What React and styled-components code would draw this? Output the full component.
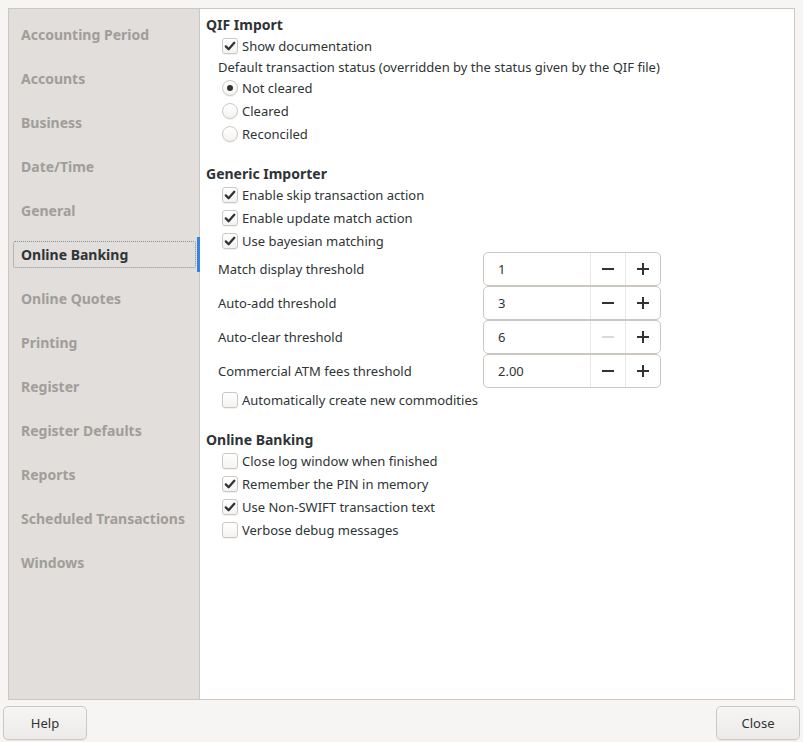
import styled, { createGlobalStyle } from 'styled-components';


const GlobalStyle = createGlobalStyle`
  html, body {
    margin: 0;
    padding: 0;
    background: #f6f5f4;
    font-family: "Noto Sans", "DejaVu Sans", sans-serif;
    color: #2e3436;
  }
`;


const pages = [
  'Accounting Period',
  'Accounts',
  'Business',
  'Date/Time',
  'General',
  'Online Banking',
  'Online Quotes',
  'Printing',
  'Register',
  'Register Defaults',
  'Reports',
  'Scheduled Transactions',
  'Windows',
];

const spins = [
  { label: 'Match display threshold', value: '1' },
  { label: 'Auto-add threshold', value: '3' },
  { label: 'Auto-clear threshold', value: '6', minDisabled: true },
  { label: 'Commercial ATM fees threshold', value: '2.00' },
];


function CheckMark() {
  return (
    <svg width="12" height="12" viewBox="0 0 12 12">
      <path d="M1.8 6.4 L4.6 9.2 L10.3 2.8" fill="none" stroke="#2e3436" strokeWidth="2.3" strokeLinecap="round" strokeLinejoin="round" />
    </svg>
  );
}


function Check({ checked, children }) {
  return (
    <OptionRow>
      <CheckBox>{checked && <CheckMark />}</CheckBox>
      <span>{children}</span>
    </OptionRow>
  );
}


function Radio({ checked, children }) {
  return (
    <OptionRow>
      <RadioCircle $checked={checked} />
      <span>{children}</span>
    </OptionRow>
  );
}


function SpinRow({ label, value, minDisabled }) {
  return (
    <SpinLine>
      <SpinLabel>{label}</SpinLabel>
      <SpinBox>
        <SpinEntry>{value}</SpinEntry>
        <SpinButton $disabled={minDisabled}>
          <svg width="12" height="12" viewBox="0 0 12 12">
            <rect x="0" y="5" width="12" height="2" fill="currentColor" />
          </svg>
        </SpinButton>
        <SpinButton>
          <svg width="12" height="12" viewBox="0 0 12 12">
            <rect x="0" y="5" width="12" height="2" fill="currentColor" />
            <rect x="5" y="0" width="2" height="12" fill="currentColor" />
          </svg>
        </SpinButton>
      </SpinBox>
    </SpinLine>
  );
}


function App() {

  return (
    <Window>
      <GlobalStyle />

      <Frame>

        <Sidebar>
          {
            pages.map(name => (
              <SideItem key={name} $active={name === 'Online Banking'}>
                <SideLabel $active={name === 'Online Banking'}>{name}</SideLabel>
              </SideItem>
            ))
          }
        </Sidebar>

        <Content>

          <SectionTitle>QIF Import</SectionTitle>
          <Check checked>Show documentation</Check>
          <NoteLabel>Default transaction status (overridden by the status given by the QIF file)</NoteLabel>
          <Radio checked>Not cleared</Radio>
          <Radio>Cleared</Radio>
          <Radio>Reconciled</Radio>

          <SectionTitle $gap>Generic Importer</SectionTitle>
          <Check checked>Enable skip transaction action</Check>
          <Check checked>Enable update match action</Check>
          <Check checked>Use bayesian matching</Check>
          {
            spins.map(s => <SpinRow key={s.label} {...s} />)
          }
          <Check>Automatically create new commodities</Check>

          <SectionTitle $gap>Online Banking</SectionTitle>
          <Check>Close log window when finished</Check>
          <Check checked>Remember the PIN in memory</Check>
          <Check checked>Use Non-SWIFT transaction text</Check>
          <Check>Verbose debug messages</Check>

        </Content>

      </Frame>

      <Footer>
        <Button>Help</Button>
        <Button>Close</Button>
      </Footer>

    </Window>
  );
}


const Window = styled.div`
  width: 803px;
  height: 742px;
  display: flex;
  flex-direction: column;
  box-sizing: border-box;
  overflow: hidden;
`;

const Frame = styled.div`
  margin: 8px 8px 0 8px;
  height: 692px;
  box-sizing: border-box;
  border: 1px solid #cdc7c2;
  display: flex;
  background: #ffffff;
`;

const Sidebar = styled.div`
  width: 191px;
  flex: none;
  background: #e1dedb;
  border-right: 1px solid #cdc7c2;
  box-sizing: border-box;
  padding-top: 4px;
`;

const SideItem = styled.div`
  position: relative;
  height: 44px;
  box-sizing: border-box;
  padding: 8px 3px 9px 4px;

  &::after{
    content: '';
    display: ${p => p.$active ? 'block' : 'none'};
    position: absolute;
    right: -1px;
    top: 4px;
    width: 3px;
    height: 35px;
    background: #3584e4;
  }
`;

const SideLabel = styled.div`
  height: 27px;
  box-sizing: border-box;
  padding-left: 7px;
  display: flex;
  align-items: center;
  font-size: 14px;
  font-weight: 700;
  color: ${p => p.$active ? '#2e3436' : '#a09d9a'};
  border: 1px dotted ${p => p.$active ? '#8b8e8f' : 'transparent'};
  border-radius: 2px;
`;

const Content = styled.div`
  flex: 1;
  padding: 5px 6px 0 6px;
  font-size: 13px;
  display: flex;
  flex-direction: column;
`;

const SectionTitle = styled.div`
  height: 20px;
  display: flex;
  align-items: center;
  font-size: 14px;
  font-weight: 700;
  margin-top: ${p => p.$gap ? '18px' : '0'};
`;

const OptionRow = styled.div`
  height: 23px;
  display: flex;
  align-items: center;
  gap: 4px;
  padding-left: 16px;
`;

const CheckBox = styled.span`
  width: 14px;
  height: 14px;
  flex: none;
  border: 1px solid #cdc7c2;
  border-radius: 3px;
  background: linear-gradient(#ffffff, #f4f3f2);
  box-shadow: 0 1px 0 rgba(0,0,0,0.06);
  display: flex;
  align-items: center;
  justify-content: center;
`;

const RadioCircle = styled.span`
  width: 14px;
  height: 14px;
  flex: none;
  border: 1px solid #cdc7c2;
  border-radius: 50%;
  background: linear-gradient(#ffffff, #f4f3f2);
  box-shadow: 0 1px 0 rgba(0,0,0,0.06);
  display: flex;
  align-items: center;
  justify-content: center;

  &::after{
    content: '';
    display: ${p => p.$checked ? 'block' : 'none'};
    width: 6px;
    height: 6px;
    border-radius: 50%;
    background: #2e3436;
  }
`;

const NoteLabel = styled.div`
  height: 19px;
  display: flex;
  align-items: center;
  padding-left: 12px;
`;

const SpinLine = styled.div`
  display: grid;
  grid-template-columns: 265px 178px;
  align-items: center;
  padding-left: 12px;
  height: 34px;
`;

const SpinLabel = styled.span``;

const SpinBox = styled.div`
  height: 34px;
  box-sizing: border-box;
  border: 1px solid #cdc7c2;
  border-radius: 5px;
  display: grid;
  grid-template-columns: 1fr 35px 35px;
  background: #ffffff;
`;

const SpinEntry = styled.div`
  display: flex;
  align-items: center;
  padding-left: 14px;
`;

const SpinButton = styled.div`
  display: flex;
  align-items: center;
  justify-content: center;
  border-left: 1px solid #eae8e6;
  color: ${p => p.$disabled ? '#dcdad8' : '#2e3436'};
`;

const Footer = styled.div`
  display: flex;
  justify-content: space-between;
  padding: 6px 3px 0 3px;
`;

const Button = styled.button`
  width: 84px;
  height: 34px;
  box-sizing: border-box;
  border: 1px solid #cdc7c2;
  border-radius: 5px;
  background: linear-gradient(#f6f5f4, #edebe9);
  box-shadow: 0 1px 1px rgba(0,0,0,0.05);
  font-family: "Noto Sans", "DejaVu Sans", sans-serif;
  font-size: 13px;
  color: #2e3436;
`;

export default App;
